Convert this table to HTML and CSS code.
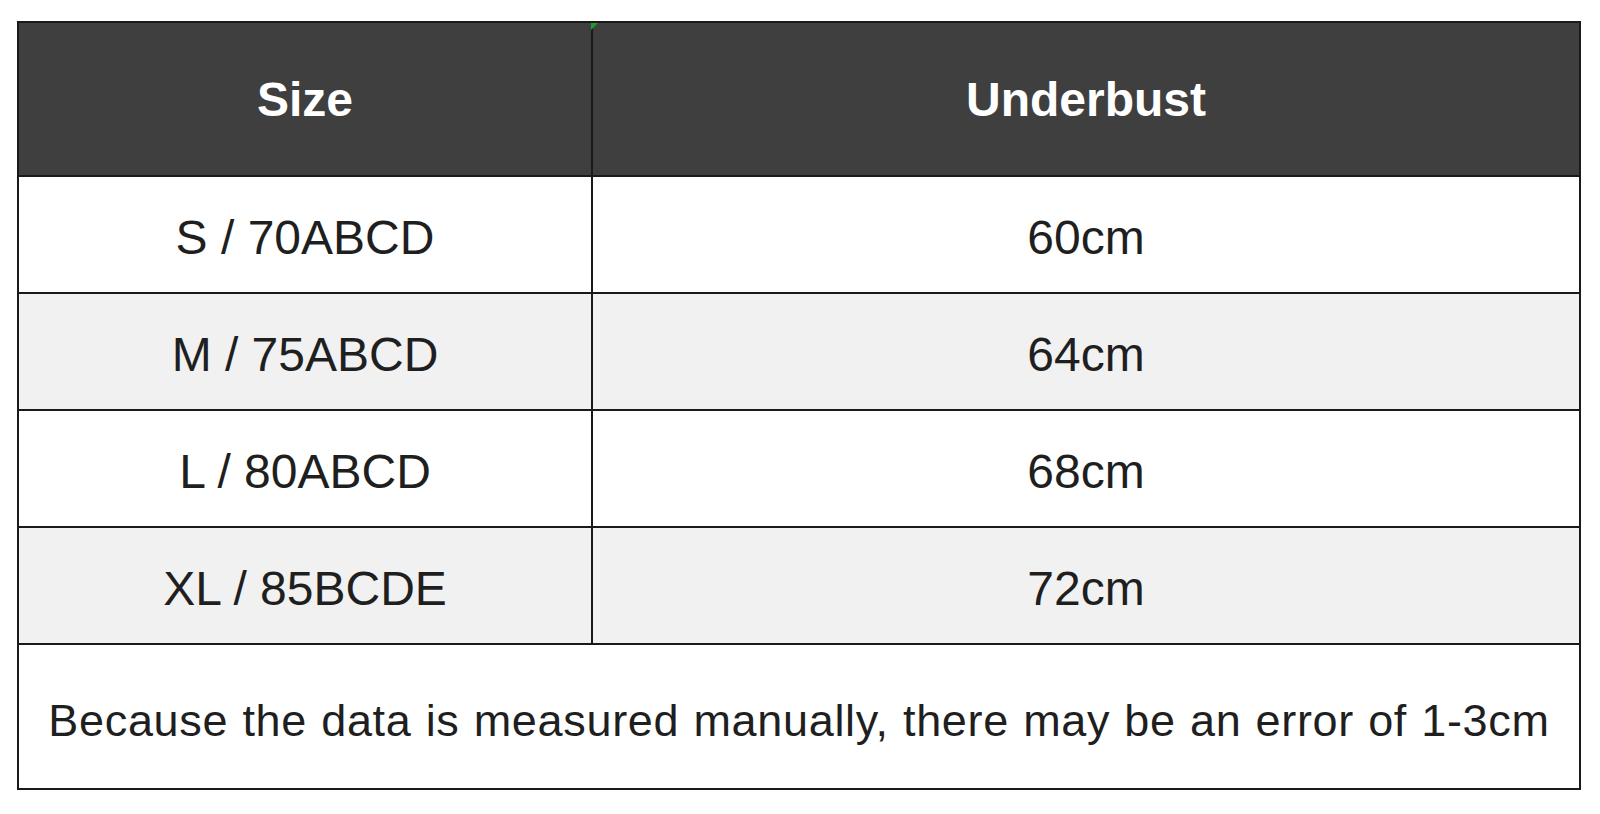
FILE: index.html
```html
<!DOCTYPE html>
<html lang="en">
<head>
<meta charset="utf-8">
<title>Size chart</title>
<link rel="stylesheet" href="styles.css">
</head>
<body>
<div class="sheet">
  <table class="chart">
    <colgroup>
      <col class="col-size">
      <col class="col-value">
    </colgroup>
    <thead>
      <tr class="head-row">
        <th>Size</th>
        <th class="marked">Underbust</th>
      </tr>
    </thead>
    <tbody>
      <tr class="row"><td>S / 70ABCD</td><td>60cm</td></tr>
      <tr class="row alt"><td>M / 75ABCD</td><td>64cm</td></tr>
      <tr class="row"><td>L / 80ABCD</td><td>68cm</td></tr>
      <tr class="row alt"><td>XL / 85BCDE</td><td>72cm</td></tr>
      <tr class="note-row"><td colspan="2">Because the data is measured manually, there may be an error of 1-3cm</td></tr>
    </tbody>
  </table>
</div>
</body>
</html>
```

FILE: styles.css
```css
html, body {
  margin: 0;
  padding: 0;
  background: #ffffff;
}

body {
  font-family: "Liberation Sans", Arial, sans-serif;
  color: #1f1f1f;
}

.sheet {
  padding: 21px 0 0 17px;
}

.chart {
  border-collapse: collapse;
  table-layout: fixed;
  width: 1562px;
  border: 2px solid #161616;
}

.col-size { width: 574px; }
.col-value { width: 988px; }

.chart th,
.chart td {
  border: 2px solid #1a1a1a;
  text-align: center;
  vertical-align: middle;
  padding: 0;
}

.head-row { height: 154px; }

.head-row th {
  background: #3f3f3f;
  color: #ffffff;
  font-weight: 700;
  font-size: 48px;
  padding-top: 1px;
}

.marked { position: relative; }

.marked::before {
  content: "";
  position: absolute;
  left: -2px;
  top: 0;
  width: 0;
  height: 0;
  border-top: 7px solid #1f9a2e;
  border-right: 7px solid transparent;
}

.row { height: 117px; }

.row td {
  font-size: 48px;
  background: #ffffff;
  padding-top: 5px;
}

.row.alt td { background: #f1f1f1; }

.note-row { height: 145px; }

.note-row td {
  font-size: 45px;
  background: #ffffff;
  letter-spacing: 0.68px;
  word-spacing: 1px;
  padding-top: 8px;
}
```
